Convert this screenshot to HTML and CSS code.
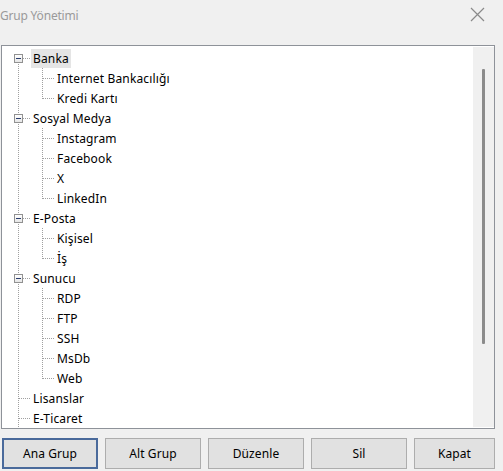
FILE: index.html
```html
<!DOCTYPE html>
<html lang="tr">
<head>
<meta charset="utf-8">
<title>Grup Yönetimi</title>
<link rel="stylesheet" href="styles.css">
</head>
<body>
<div class="window">
  <div class="titlebar">
    <span class="title">Grup Yönetimi</span>
    <svg class="close" width="15" height="15" viewBox="0 0 15 15"><path d="M1 1 L14 14 M14 1 L1 14" stroke="#8a8a8a" stroke-width="1.2" fill="none"/></svg>
  </div>
  <div class="tree-box">
    <div class="tree">
      <div class="row"><span class="cell vtop branch"><span class="toggle"></span></span><span class="label sel">Banka</span></div>
      <div class="row"><span class="cell vfull"></span><span class="cell vfull branch"></span><span class="label">Internet Bankacılığı</span></div>
      <div class="row"><span class="cell vfull"></span><span class="cell vlast branch"></span><span class="label">Kredi Kartı</span></div>
      <div class="row"><span class="cell vfull branch"><span class="toggle"></span></span><span class="label">Sosyal Medya</span></div>
      <div class="row"><span class="cell vfull"></span><span class="cell vfull branch"></span><span class="label">Instagram</span></div>
      <div class="row"><span class="cell vfull"></span><span class="cell vfull branch"></span><span class="label">Facebook</span></div>
      <div class="row"><span class="cell vfull"></span><span class="cell vfull branch"></span><span class="label">X</span></div>
      <div class="row"><span class="cell vfull"></span><span class="cell vlast branch"></span><span class="label">LinkedIn</span></div>
      <div class="row"><span class="cell vfull branch"><span class="toggle"></span></span><span class="label">E-Posta</span></div>
      <div class="row"><span class="cell vfull"></span><span class="cell vfull branch"></span><span class="label">Kişisel</span></div>
      <div class="row"><span class="cell vfull"></span><span class="cell vlast branch"></span><span class="label">İş</span></div>
      <div class="row"><span class="cell vfull branch"><span class="toggle"></span></span><span class="label">Sunucu</span></div>
      <div class="row"><span class="cell vfull"></span><span class="cell vfull branch"></span><span class="label">RDP</span></div>
      <div class="row"><span class="cell vfull"></span><span class="cell vfull branch"></span><span class="label">FTP</span></div>
      <div class="row"><span class="cell vfull"></span><span class="cell vfull branch"></span><span class="label">SSH</span></div>
      <div class="row"><span class="cell vfull"></span><span class="cell vfull branch"></span><span class="label">MsDb</span></div>
      <div class="row"><span class="cell vfull"></span><span class="cell vlast branch"></span><span class="label">Web</span></div>
      <div class="row"><span class="cell vfull branch"></span><span class="label">Lisanslar</span></div>
      <div class="row"><span class="cell vfull branch"></span><span class="label">E-Ticaret</span></div>
    </div>
    <div class="scrollbar"><div class="thumb"></div></div>
  </div>
  <div class="buttons">
    <button class="btn focused">Ana Grup</button>
    <button class="btn">Alt Grup</button>
    <button class="btn">Düzenle</button>
    <button class="btn">Sil</button>
    <button class="btn narrow">Kapat</button>
  </div>
</div>
</body>
</html>
```

FILE: styles.css
```css
html, body {
  margin: 0;
  padding: 0;
  background: #f0f0f0;
}
body {
  font-family: "Noto Sans", "Liberation Sans", sans-serif;
  font-size: 12px;
  color: #000;
  width: 503px;
  height: 471px;
  overflow: hidden;
}
.window {
  display: flex;
  flex-direction: column;
}
.titlebar {
  height: 30px;
  display: flex;
  align-items: center;
  justify-content: space-between;
  padding: 0 18px 0 0;
}
.title {
  color: #9a9a9a;
  font-size: 12px;
  letter-spacing: -0.2px;
}
.close {
  display: block;
  margin-top: -1px;
}
.tree-box {
  margin: 15px 0 0 1px;
  width: 492px;
  height: 382px;
  border: 1px solid #8e9299;
  background: #fff;
  display: flex;
  overflow: hidden;
}
.tree {
  flex: 1;
  padding: 2px 0 0 4px;
  overflow: hidden;
}
.row {
  display: flex;
  align-items: center;
  height: 20px;
}
.cell {
  width: 24px;
  height: 20px;
  flex: none;
  display: flex;
  align-items: center;
  background-repeat: no-repeat;
}
.cell.vfull {
  background-image: repeating-linear-gradient(to bottom, #a0a0a0 0 1px, transparent 1px 2px);
  background-size: 1px 20px;
  background-position: 12px 0;
}
.cell.vlast {
  background-image: repeating-linear-gradient(to bottom, #a0a0a0 0 1px, transparent 1px 2px);
  background-size: 1px 11px;
  background-position: 12px 0;
}
.cell.vtop {
  background-image: repeating-linear-gradient(to bottom, #a0a0a0 0 1px, transparent 1px 2px);
  background-size: 1px 10px;
  background-position: 12px 10px;
}
.cell.branch.vfull,
.cell.branch.vlast,
.cell.branch.vtop {
  background-image:
    repeating-linear-gradient(to right, #a0a0a0 0 1px, transparent 1px 2px),
    repeating-linear-gradient(to bottom, #a0a0a0 0 1px, transparent 1px 2px);
  background-repeat: no-repeat, no-repeat;
}
.cell.branch.vfull {
  background-size: 12px 1px, 1px 20px;
  background-position: 13px 10px, 12px 0;
}
.cell.branch.vlast {
  background-size: 12px 1px, 1px 11px;
  background-position: 13px 10px, 12px 0;
}
.cell.branch.vtop {
  background-size: 12px 1px, 1px 10px;
  background-position: 13px 10px, 12px 10px;
}
.toggle {
  width: 9px;
  height: 9px;
  box-sizing: border-box;
  margin-left: 8px;
  border: 1px solid #919191;
  background: linear-gradient(#fff, #e6e6e6);
  display: flex;
  align-items: center;
  justify-content: center;
}
.toggle::before {
  content: "";
  width: 5px;
  height: 1px;
  background: #2a3d6e;
}
.label {
  padding: 0 2px;
  margin-left: 1px;
  height: 19px;
  line-height: 19px;
  white-space: nowrap;
  letter-spacing: 0.15px;
}
.label.sel {
  background: #e5e5e5;
}
.scrollbar {
  width: 21px;
  flex: none;
  margin: 1px 0 1px 0;
  background: #f0f0f0;
  display: flex;
  justify-content: center;
  padding-top: 22px;
  box-sizing: border-box;
}
.thumb {
  width: 3px;
  height: 275px;
  background: #8b8b8b;
  border-radius: 1px;
}
.buttons {
  display: flex;
  gap: 7px;
  margin: 9px 0 0 2px;
}
.btn {
  width: 96px;
  height: 31px;
  box-sizing: border-box;
  border: 1px solid #adadad;
  background: #e1e1e1;
  font-family: inherit;
  font-size: 12px;
  line-height: 16px;
  color: #000;
  padding: 0;
  letter-spacing: 0.1px;
}
.btn.focused {
  border: 2px solid #4a6a9b;
}
.btn.narrow {
  width: 81px;
}
```
